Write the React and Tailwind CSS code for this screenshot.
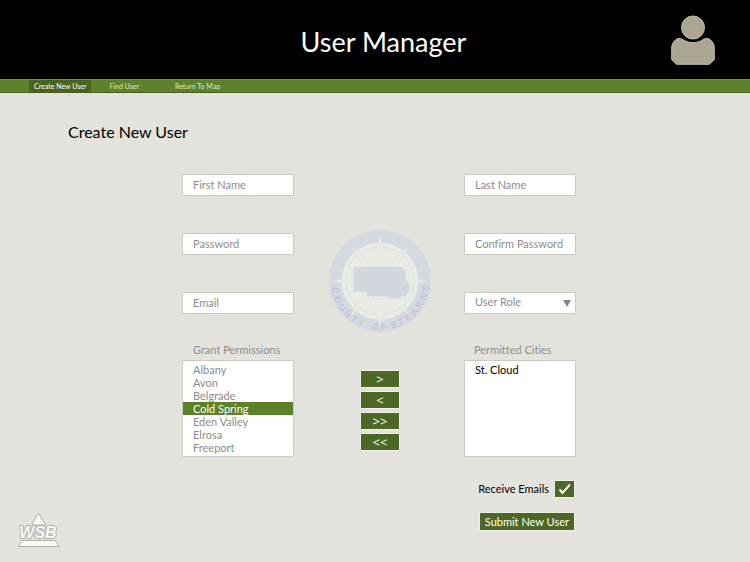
import React from "react";

const CITIES = ["Albany", "Avon", "Belgrade", "Cold Spring", "Eden Valley", "Elrosa", "Freeport"];

const SEAL_LETTERS = [
  ["C", 12], ["O", 24], ["U", 35], ["N", 46], ["T", 56], ["Y", 65],
  ["O", 84], ["F", 94],
  ["S", 107], ["T", 117], ["E", 128], ["A", 138], ["R", 149], ["N", 160], ["S", 171],
];

const FIELD =
  "block h-[22px] w-full rounded-[1px] border border-[#cbcac3] bg-white px-[10px] pb-[2px] text-[11px] text-[#8c8c8c] placeholder:text-[#8c8c8c] placeholder:opacity-100 focus:outline-none";
const LIST =
  "block h-[97px] w-full appearance-none overflow-hidden rounded-[1px] border border-[#cbcac3] bg-white py-[2px] text-[11px] focus:outline-none";
const OPTION =
  "block h-[13px] min-h-0 px-[10px] py-0 leading-[13px] checked:bg-linear-to-r checked:from-[#5a8227] checked:to-[#5a8227] checked:[-webkit-text-fill-color:white]";

function PersonIcon() {
  return (
    <svg width="44" height="50" viewBox="0 0 44 50" aria-hidden="true">
      <g fill="#aba591" stroke="#c4bfa9" strokeWidth="1">
        <circle cx="22" cy="12.5" r="11.5" />
        <path d="M7 23.5C10 23 12 24.5 14.5 26C19 28.3 25 28.3 29.5 26C32 24.5 34 23 37 23.5C41 25 43.3 29 43.3 33V44.5L38.5 49.3H5.5L.7 44.5V33C.7 29 3 25 7 23.5Z" />
      </g>
    </svg>
  );
}

function CountySeal() {
  return (
    <svg className="h-[104px] w-[104px]" viewBox="-52 -52 104 104" role="img" aria-label="County of Stearns">
      <circle r="51" fill="#d4d9df" />
      <circle r="38.5" fill="#ebebe6" />
      <circle r="34" fill="none" stroke="#dfe0dd" strokeWidth="1" />
      <g stroke="#e0e1df" strokeWidth=".7">
        {[22, 68, 112, 158].map((a) => (
          <path key={a} d="M0 -34V34" transform={`rotate(${a})`} />
        ))}
      </g>
      <g fill="#ebebe6">
        {[40, 140, 220, 320].map((a) => (
          <path key={a} d="M0 -46L3 -28L0 0L-3 -28Z" stroke="#dcdedd" strokeWidth=".4" transform={`rotate(${a})`} />
        ))}
        {[0, 90, 180, 270].map((a) => (
          <g key={a} stroke="#dcdedd" strokeWidth=".4" transform={`rotate(${a})`}>
            <path d="M0 -47L4 -28L0 0L-4 -28Z" />
            <path d="M0 -40V0" />
          </g>
        ))}
      </g>
      <path
        d="M-26.3 -14H22L23 -12L25 -10L26 -7L25.7 -1L28.5 1.5L30 6L28.5 11L24.5 16L22 15L20.5 17L10.5 17.7L9 15.5H-13L-14 10.5H-26.3Z"
        fill="#d2d7dd"
      />
      <g fill="#b9bada" className="font-['Liberation_Sans',sans-serif] text-[9px]">
        {SEAL_LETTERS.map(([letter, a]) => (
          <text
            key={a}
            textAnchor="middle"
            transform={`rotate(${90 - a}) translate(0 49)`}
          >
            {letter}
          </text>
        ))}
      </g>
    </svg>
  );
}

function WsbLogo() {
  return (
    <svg className="h-[38px] w-[44px]" viewBox="0 0 44 38" role="img" aria-label="WSB">
      <g fill="#fafaf8" stroke="#b0afa9" strokeWidth="1" strokeLinejoin="round">
        <path d="M21.5 1L28.5 13H14.5Z" />
        <path d="M5 28.5H38L42 34.5H1.5Z" />
        <text
          x="21"
          y="25.5"
          textAnchor="middle"
          paintOrder="stroke"
          strokeWidth="2"
          className="font-['Liberation_Sans',sans-serif] text-[16px] font-bold italic"
        >
          WSB
        </text>
      </g>
    </svg>
  );
}

function NavLink({ active, children }) {
  return (
    <a
      href="#"
      className={
        active
          ? "bg-[#48651f] px-[5px] text-white"
          : "px-[5px] text-[#dfe8cf]"
      }
    >
      {children}
    </a>
  );
}

export default function App() {
  return (
    <div className="flex min-h-screen flex-col bg-[#e3e2dd] font-['Lato','Open_Sans',sans-serif] text-black [font-variant-ligatures:none]">
      <header className="grid h-[79px] grid-cols-[1fr_auto_1fr] items-center bg-black pr-[35px] pl-[52px]">
        <span />
        <h1 className="pt-[5px] text-[27px] leading-[32px] text-white">User Manager</h1>
        <div className="justify-self-end">
          <PersonIcon />
        </div>
      </header>

      <nav className="flex h-[14px] gap-[13px] border-t border-b border-t-[#6f9638] border-b-[#48601f] bg-[#5c822c] pl-[29px] text-[7px] leading-[12px]">
        <NavLink active>Create New User</NavLink>
        <NavLink>Find User</NavLink>
        <div className="pl-[13px]">
          <NavLink>Return To Map</NavLink>
        </div>
      </nav>

      <main className="flex flex-1 flex-col">
        <h2 className="pt-[29px] pl-[68px] text-[16px] leading-[20px]">Create New User</h2>

        <form
          className="grid flex-1 grid-cols-[182px_1fr_174px] pb-[12px]"
          onSubmit={(e) => e.preventDefault()}
        >
          <div className="self-end pl-[17px]">
            <WsbLogo />
          </div>

          <div className="grid grid-cols-[112px_1fr_112px] pt-[32px]">
            <div className="flex flex-col gap-[37px]">
              <input className={FIELD} type="text" placeholder="First Name" aria-label="First Name" />
              <input className={FIELD} type="password" placeholder="Password" aria-label="Password" />
              <div>
                <input className={FIELD} type="email" placeholder="Email" aria-label="Email" />
                <label htmlFor="grant" className="block pt-[28px] pb-[2px] pl-[11px] text-[11px] leading-[16px] text-[#8c8c8c]">
                  Grant Permissions
                </label>
                <select id="grant" multiple size={7} defaultValue={["Cold Spring"]} className={LIST}>
                  {CITIES.map((city) => (
                    <option key={city} className={`${OPTION} text-[#8c8c8c]`}>
                      {city}
                    </option>
                  ))}
                </select>
              </div>
            </div>

            <div className="flex flex-col items-center pt-[55px] pl-[2px]">
              <CountySeal />
              <div className="flex flex-col gap-[5px] pt-[38px]">
                {[
                  [">", "Add"],
                  ["<", "Remove"],
                  [">>", "Add all"],
                  ["<<", "Remove all"],
                ].map(([sign, label]) => (
                  <button
                    key={sign}
                    type="button"
                    aria-label={label}
                    className="h-[16px] w-[38px] bg-[#4c6824] font-['Open_Sans',sans-serif] text-[13px] leading-[16px] text-white outline outline-[#eeeeea]"
                  >
                    {sign}
                  </button>
                ))}
              </div>
            </div>

            <div className="flex flex-col gap-[37px]">
              <input className={FIELD} type="text" placeholder="Last Name" aria-label="Last Name" />
              <input className={FIELD} type="password" placeholder="Confirm Password" aria-label="Confirm Password" />
              <div>
                <div className="relative">
                  <select className={`${FIELD} appearance-none`} aria-label="User Role">
                    <option>User Role</option>
                  </select>
                  <svg className="pointer-events-none absolute top-[8px] right-[5px]" width="8" height="7" viewBox="0 0 8 7" aria-hidden="true">
                    <path d="M0 0H8L4 7Z" fill="#858585" />
                  </svg>
                </div>
                <label htmlFor="permitted" className="block pt-[28px] pb-[2px] pl-[10px] text-[11px] leading-[16px] text-[#8c8c8c]">
                  Permitted Cities
                </label>
                <select id="permitted" multiple size={7} defaultValue={[]} className={LIST}>
                  <option className={`${OPTION} text-black`}>St. Cloud</option>
                </select>
                <div className="flex flex-col items-end gap-[16px] pt-[24px] pr-[2px]">
                  <div className="flex h-[16px] items-center gap-[6px]">
                    <label htmlFor="emails" className="text-[11px] leading-[16px] whitespace-nowrap">
                      Receive Emails
                    </label>
                    <div className="relative h-[16px] w-[19px]">
                      <input
                        id="emails"
                        type="checkbox"
                        defaultChecked
                        className="peer block h-[16px] w-[19px] appearance-none bg-[#4c6824] outline outline-[#eeeeea]"
                      />
                      <svg className="pointer-events-none invisible absolute inset-0 peer-checked:visible" width="19" height="16" viewBox="0 0 19 16" aria-hidden="true">
                        <path d="M4.5 8.5L7.5 12L15 3.5" fill="none" stroke="white" strokeWidth="2" />
                      </svg>
                    </div>
                  </div>
                  <button
                    type="submit"
                    className="h-[17px] bg-[#4c6824] px-[5px] text-[11px] leading-[17px] whitespace-nowrap text-white outline outline-[#eeeeea]"
                  >
                    Submit New User
                  </button>
                </div>
              </div>
            </div>
          </div>
          <span />
        </form>
      </main>
    </div>
  );
}
